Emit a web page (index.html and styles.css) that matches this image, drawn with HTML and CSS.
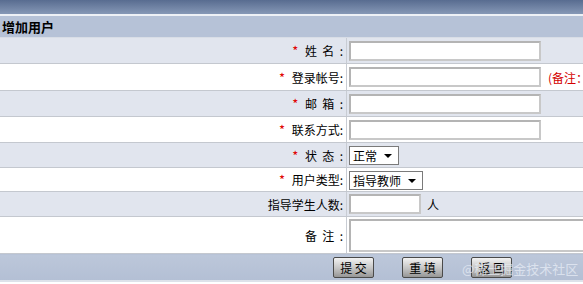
FILE: index.html
```html
<!DOCTYPE html>
<html>
<head>
<meta charset="utf-8">
<link rel="stylesheet" href="styles.css">
</head>
<body>
<div class="topbar"></div>
<div class="title">增加用户</div>
<table class="form">
  <tr class="r grey h26">
    <td class="lab"><span class="req">*</span> 姓&nbsp;&nbsp;名&nbsp;&nbsp;:</td>
    <td class="val"><span class="inp w192"></span></td>
  </tr>
  <tr class="r white h27">
    <td class="lab"><span class="req">*</span> 登录帐号:</td>
    <td class="val"><span class="inp w192"></span><span class="note">(备注：</span></td>
  </tr>
  <tr class="r grey h26">
    <td class="lab"><span class="req">*</span> 邮&nbsp;&nbsp;箱&nbsp;&nbsp;:</td>
    <td class="val"><span class="inp w192"></span></td>
  </tr>
  <tr class="r white h26">
    <td class="lab"><span class="req">*</span> 联系方式:</td>
    <td class="val"><span class="inp w192"></span></td>
  </tr>
  <tr class="r grey h25">
    <td class="lab"><span class="req">*</span> 状&nbsp;&nbsp;态&nbsp;&nbsp;:</td>
    <td class="val"><span class="sel w50">正常<i class="arr"></i></span></td>
  </tr>
  <tr class="r white h24">
    <td class="lab"><span class="req">*</span> 用户类型:</td>
    <td class="val"><span class="sel w74">指导教师<i class="arr"></i></span></td>
  </tr>
  <tr class="r grey h25">
    <td class="lab">指导学生人数:</td>
    <td class="val"><span class="inp w72"></span><span class="unit">人</span></td>
  </tr>
  <tr class="r white h37">
    <td class="lab">备&nbsp;&nbsp;注&nbsp;&nbsp;:</td>
    <td class="val"><span class="area"></span></td>
  </tr>
  <tr class="foot">
    <td colspan="2">
      <div class="btns">
        <button class="btn">提&nbsp;交</button>
        <button class="btn">重&nbsp;填</button>
        <button class="btn">返&nbsp;回</button>
        <span class="wm">@稀土掘金技术社区</span>
      </div>
    </td>
  </tr>
</table>
</body>
</html>
```
FILE: styles.css
```css
html, body {
  margin: 0;
  padding: 0;
  background: #fff;
  font-family: "Noto Sans CJK SC", "Noto Sans", sans-serif;
  font-size: 12px;
  color: #000;
  overflow: hidden;
}
.topbar {
  height: 14px;
  background: linear-gradient(#586c90, #8698b6);
  border-bottom: 2px solid #eef1f6;
}
.title {
  height: 21px;
  line-height: 21px;
  background: #b6c2d7;
  font-weight: bold;
  font-size: 13px;
  padding-left: 2px;
  border-bottom: 1px solid #d8dde6;
}
.form {
  border-collapse: collapse;
  width: 100%;
  table-layout: fixed;
}
.form td {
  padding: 0;
  border-bottom: 1px solid #c4c8cf;
}
.lab {
  width: 343px;
  text-align: right;
  padding-right: 3px !important;
  border-right: 1px solid #c8ccd3;
  white-space: nowrap;
}
.val {
  padding-left: 2px !important;
  white-space: nowrap;
  overflow: hidden;
}
.grey td { background: #e1e5ee; }
.white td { background: #fff; }
.h24 td { height: 23px; }
.h25 td { height: 24px; }
.h26 td { height: 25px; }
.h27 td { height: 26px; }
.h37 td { height: 36px; }
.req { color: #e00000; margin-right: 4px; font-size: 13px; }
.inp {
  display: inline-block;
  vertical-align: middle;
  height: 16px;
  border: 2px solid #b4b4b4;
  border-right-color: #c8c8c8;
  border-bottom-color: #c8c8c8;
  background: #fff;
}
.w192 { width: 188px; }
.w72 { width: 68px; }
.note {
  color: #d40000;
  font-size: 12px;
  margin-left: 7px;
  vertical-align: middle;
}
.unit {
  margin-left: 6px;
  vertical-align: middle;
}
.sel {
  display: inline-flex;
  align-items: center;
  box-sizing: border-box;
  height: 19px;
  border: 1px solid #7a7a7a;
  background: #fff;
  padding-left: 3px;
  vertical-align: middle;
  position: relative;
  font-size: 12px;
}
.w50 { width: 50px; }
.w74 { width: 74px; }
.arr {
  position: absolute;
  right: 6px;
  top: 7px;
  width: 0;
  height: 0;
  border-left: 4px solid transparent;
  border-right: 4px solid transparent;
  border-top: 4px solid #000;
}
.area {
  display: block;
  height: 29px;
  width: 300px;
  border: 2px solid #b4b4b4;
  border-right-color: #c8c8c8;
  border-bottom-color: #c8c8c8;
  background: #fff;
}
.foot td {
  height: 26px;
  background: linear-gradient(#bcc7da, #b3bfd4);
  border-bottom: 2px solid #dde2ea;
}
.btns {
  display: flex;
  align-items: center;
  padding-left: 333px;
  gap: 28px;
  position: relative;
}
.btn {
  width: 41px;
  height: 21px;
  padding: 0;
  border: 1px solid #4a4a4a;
  border-radius: 2px;
  background: linear-gradient(#f2f2f2, #c4c4c4 55%, #969696);
  font-family: "Noto Sans CJK SC", sans-serif;
  font-size: 12px;
  color: #000;
  line-height: 19px;
}
.wm {
  position: absolute;
  left: 462px;
  top: 2px;
  font-size: 13px;
  color: rgba(235, 240, 248, 0.7);
}
```
